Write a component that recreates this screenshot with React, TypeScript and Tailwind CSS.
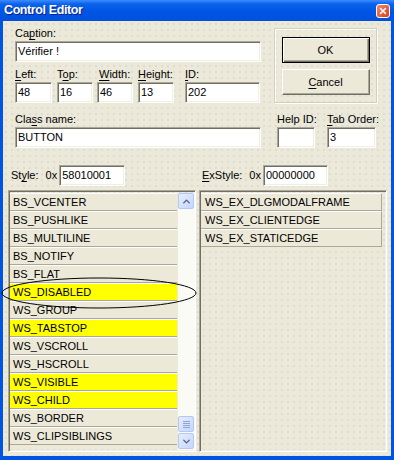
import { ChevronUp, ChevronDown, X } from "lucide-react";

const styleItems = [
  { name: "BS_VCENTER", on: false },
  { name: "BS_PUSHLIKE", on: false },
  { name: "BS_MULTILINE", on: false },
  { name: "BS_NOTIFY", on: false },
  { name: "BS_FLAT", on: false },
  { name: "WS_DISABLED", on: true },
  { name: "WS_GROUP", on: false },
  { name: "WS_TABSTOP", on: true },
  { name: "WS_VSCROLL", on: false },
  { name: "WS_HSCROLL", on: false },
  { name: "WS_VISIBLE", on: true },
  { name: "WS_CHILD", on: true },
  { name: "WS_BORDER", on: false },
  { name: "WS_CLIPSIBLINGS", on: false },
];

const exStyleItems = ["WS_EX_DLGMODALFRAME", "WS_EX_CLIENTEDGE", "WS_EX_STATICEDGE"];

function Field({ value, className = "" }: { value?: string; className?: string }) {
  return (
    <div
      className={`h-[21px] bg-white border border-t-[#aca899] border-l-[#aca899] border-b-white border-r-white shadow-[inset_1px_1px_0_#716f64,inset_-1px_-1px_0_#f1efe2] flex items-center pl-[2px] text-[11px] text-black ${className}`}
    >
      {value}
    </div>
  );
}

function Label({ pre = "", u, post = "", className = "" }: { pre?: string; u?: string; post?: string; className?: string }) {
  return (
    <div className={`h-[13px] leading-[13px] text-[11px] text-black whitespace-nowrap ${className}`}>
      {pre}
      {u && <span className="underline underline-offset-[2px]">{u}</span>}
      {post}
    </div>
  );
}

function ScrollButton({ children }: { children: React.ReactNode }) {
  return (
    <div className="w-[16px] h-[16px] rounded-[2px] border border-[#b4c8f6] bg-[linear-gradient(to_bottom_right,#e6eefc,#c5d5fc)] flex items-center justify-center text-[#4d6185]">
      {children}
    </div>
  );
}

export default function App() {
  return (
    <div className="relative w-[394px] h-[460px] bg-[#0054e3] flex flex-col font-['Liberation_Sans',Arial,sans-serif] overflow-hidden">
      {/* title bar */}
      <div className="h-[21px] flex items-center justify-between pl-[4px] pr-[4px] bg-[linear-gradient(to_bottom,#3d8bff_0%,#0a61ea_20%,#0055e5_55%,#0050dd_100%)]">
        <span className="text-white font-bold text-[12.5px] tracking-[-0.4px] [text-shadow:1px_1px_0_#0a1e8a]">Control Editor</span>
        <div className="w-[14px] h-[14px] rounded-[3px] border border-white bg-[linear-gradient(to_bottom_right,#f08a6c,#d8401c)] flex items-center justify-center">
          <X size={10} strokeWidth={3.5} color="white" />
        </div>
      </div>

      {/* body */}
      <div className="flex-1 mx-[3px] mb-[4px] bg-[#ece9d8] bg-[radial-gradient(circle,#c6cddb_0.6px,transparent_0.8px)] bg-[length:6px_6px] flex flex-col">
        {/* caption + geometry + buttons */}
        <div className="flex pl-[12px]">
          <div className="w-[246px] pt-[6px]">
            <Label pre="Ca" u="p" post="tion:" />
            <Field value="Vérifier !" className="mt-[1px] w-[246px]" />
            <div className="flex mt-[6px]">
              <div className="w-[37px] mr-[5px]">
                <Label u="L" post="eft:" />
                <Field value="48" className="mt-[1px]" />
              </div>
              <div className="w-[36px] mr-[4px]">
                <Label pre="T" u="o" post="p:" />
                <Field value="16" className="mt-[1px]" />
              </div>
              <div className="w-[36px] mr-[5px]">
                <Label u="W" post="idth:" className="pl-[2px]" />
                <Field value="46" className="mt-[1px]" />
              </div>
              <div className="w-[36px] mr-[11px]">
                <Label u="H" post="eight:" />
                <Field value="13" className="mt-[1px]" />
              </div>
              <div className="w-[75px]">
                <Label u="I" post="D:" />
                <Field value="202" className="mt-[1px]" />
              </div>
            </div>
          </div>
          <div className="ml-[13px] mt-[7px] w-[103px] h-[75px] border border-[#d0d0bf] shadow-[inset_1px_1px_0_white,1px_1px_0_white] flex flex-col items-center pt-[8px] gap-[6px]">
            <div className="w-[88px] h-[26px] border border-black bg-[#ece9d8] shadow-[inset_1px_1px_0_white,inset_-1px_-1px_0_#716f64,inset_-2px_-2px_0_#aca899] flex items-center justify-center text-[11px] text-black">
              OK
            </div>
            <div className="w-[88px] h-[26px] border border-t-white border-l-white border-b-[#716f64] border-r-[#716f64] bg-[#ece9d8] shadow-[inset_-1px_-1px_0_#aca899] flex items-center justify-center text-[11px] text-black">
              <span className="underline underline-offset-[2px]">C</span>ancel
            </div>
          </div>
        </div>

        {/* class name row */}
        <div className="flex pl-[12px] mt-[10px]">
          <div className="w-[246px]">
            <Label pre="Cla" u="s" post="s name:" />
            <Field value="BUTTON" className="mt-[1px]" />
          </div>
          <div className="w-[38px] ml-[16px]">
            <Label pre="Help ID:" />
            <Field className="mt-[1px]" />
          </div>
          <div className="w-[49px] ml-[12px]">
            <Label u="T" post="ab Order:" />
            <Field value="3" className="mt-[1px]" />
          </div>
        </div>

        {/* style row */}
        <div className="flex mt-[17px]">
          <div className="w-[196px] flex items-center pl-[8px] text-[11px] text-black">
            <span>
              St<span className="underline underline-offset-[2px]">y</span>le:
            </span>
            <span className="ml-[7px]">0x</span>
            <Field value="58010001" className="ml-[2px] w-[66px]" />
          </div>
          <div className="flex items-center pl-[3px] text-[11px] text-black">
            <span>
              <span className="underline underline-offset-[2px]">E</span>xStyle:
            </span>
            <span className="ml-[7px]">0x</span>
            <Field value="00000000" className="ml-[2px] w-[65px]" />
          </div>
        </div>

        {/* lists */}
        <div className="flex mt-[4px] pl-[5px] gap-[3px]">
          <div className="w-[188px] h-[262px] border border-t-[#aca899] border-l-[#aca899] border-b-white border-r-white shadow-[inset_1px_1px_0_#716f64,inset_-1px_-1px_0_#f1efe2] flex pl-[1px] pt-[2px] pb-[1px]">
            <div className="w-[167px] flex flex-col">
              {styleItems.map((item) => (
                <div
                  key={item.name}
                  className={`h-[18px] shrink-0 border-t border-t-white border-b border-b-[#aca899] flex items-center pl-[3px] text-[11px] text-black ${item.on ? "bg-[#ffff00]" : "bg-[#ece9d8]"}`}
                >
                  {item.name}
                </div>
              ))}
            </div>
            <div className="w-[17px] ml-[1px] bg-[#fbfbf6] flex flex-col pb-[1px]">
              <ScrollButton>
                <ChevronUp size={11} strokeWidth={3} />
              </ScrollButton>
              <div className="mt-auto">
                <ScrollButton>
                  <div className="flex flex-col gap-[1px]">
                    <div className="w-[7px] h-[1px] bg-[#8ca4dc]" />
                    <div className="w-[7px] h-[1px] bg-[#8ca4dc]" />
                    <div className="w-[7px] h-[1px] bg-[#8ca4dc]" />
                    <div className="w-[7px] h-[1px] bg-[#8ca4dc]" />
                  </div>
                </ScrollButton>
              </div>
              <div className="mt-[1px]">
                <ScrollButton>
                  <ChevronDown size={11} strokeWidth={3} />
                </ScrollButton>
              </div>
            </div>
          </div>
          <div className="w-[188px] h-[262px] border border-t-[#aca899] border-l-[#aca899] border-b-white border-r-white shadow-[inset_1px_1px_0_#716f64,inset_-1px_-1px_0_#f1efe2] pl-[1px] pt-[2px]">
            <div className="w-[181px] flex flex-col">
              {exStyleItems.map((name) => (
                <div
                  key={name}
                  className="h-[18px] border-t border-t-white border-b border-b-[#aca899] border-r border-r-[#aca899] bg-[#ece9d8] flex items-center pl-[4px] text-[11px] text-black"
                >
                  {name}
                </div>
              ))}
            </div>
          </div>
        </div>
      </div>

      {/* hand-drawn ellipse over WS_DISABLED */}
      <svg className="absolute left-0 top-0 pointer-events-none" width="394" height="460">
        <ellipse cx="99" cy="293" rx="97" ry="15" fill="none" stroke="black" strokeWidth="1" />
      </svg>
    </div>
  );
}
